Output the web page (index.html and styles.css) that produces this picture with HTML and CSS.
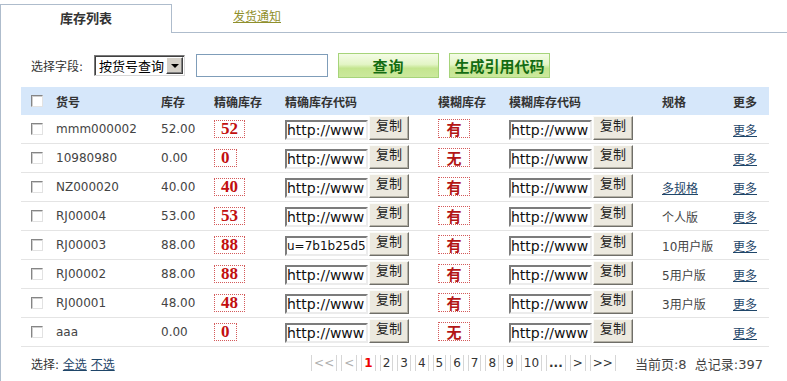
FILE: index.html
```html
<!DOCTYPE html>
<html lang="zh-CN">
<head>
<meta charset="utf-8">
<title>库存列表</title>
<link rel="stylesheet" href="styles.css">
</head>
<body>
<div class="tabs">
  <div class="tab tab-active">库存列表</div>
  <div class="tab tab-normal"><a class="tab-link" href="#">发货通知</a></div>
  <div class="tab-fill"></div>
</div>
<div class="panel">
  <div class="search">
    <span class="search-label">选择字段:</span>
    <div class="select"><span class="select-text">按货号查询</span><span class="select-btn"><span class="arrow"></span></span></div>
    <span class="text-input"></span>
    <span class="gbtn gbtn-query">查询</span>
    <span class="gbtn gbtn-gen">生成引用代码</span>
  </div>

  <div class="grid">
    <div class="grow head">
      <div class="c-cb"><span class="cb"></span></div>
      <div>货号</div><div>库存</div><div>精确库存</div><div>精确库存代码</div>
      <div>模糊库存</div><div>模糊库存代码</div><div>规格</div><div>更多</div>
    </div>

    <div class="grow row">
      <div class="c-cb"><span class="cb"></span></div>
      <div>mmm000002</div><div>52.00</div>
      <div class="c-box"><span class="box num">52</span></div>
      <div class="code"><span class="field">http://www</span><span class="copy">复制</span></div>
      <div class="c-box"><span class="box cjk">有</span></div>
      <div class="code"><span class="field">http://www</span><span class="copy">复制</span></div>
      <div></div><div><a class="link" href="#">更多</a></div>
    </div>

    <div class="grow row">
      <div class="c-cb"><span class="cb"></span></div>
      <div>10980980</div><div>0.00</div>
      <div class="c-box"><span class="box num">0</span></div>
      <div class="code"><span class="field">http://www</span><span class="copy">复制</span></div>
      <div class="c-box"><span class="box cjk">无</span></div>
      <div class="code"><span class="field">http://www</span><span class="copy">复制</span></div>
      <div></div><div><a class="link" href="#">更多</a></div>
    </div>

    <div class="grow row">
      <div class="c-cb"><span class="cb"></span></div>
      <div>NZ000020</div><div>40.00</div>
      <div class="c-box"><span class="box num">40</span></div>
      <div class="code"><span class="field">http://www</span><span class="copy">复制</span></div>
      <div class="c-box"><span class="box cjk">有</span></div>
      <div class="code"><span class="field">http://www</span><span class="copy">复制</span></div>
      <div><a class="link" href="#">多规格</a></div><div><a class="link" href="#">更多</a></div>
    </div>

    <div class="grow row">
      <div class="c-cb"><span class="cb"></span></div>
      <div>RJ00004</div><div>53.00</div>
      <div class="c-box"><span class="box num">53</span></div>
      <div class="code"><span class="field">http://www</span><span class="copy">复制</span></div>
      <div class="c-box"><span class="box cjk">有</span></div>
      <div class="code"><span class="field">http://www</span><span class="copy">复制</span></div>
      <div>个人版</div><div><a class="link" href="#">更多</a></div>
    </div>

    <div class="grow row">
      <div class="c-cb"><span class="cb"></span></div>
      <div>RJ00003</div><div>88.00</div>
      <div class="c-box"><span class="box num">88</span></div>
      <div class="code"><span class="field field-scrolled">u=7b1b25d5</span><span class="copy">复制</span></div>
      <div class="c-box"><span class="box cjk">有</span></div>
      <div class="code"><span class="field">http://www</span><span class="copy">复制</span></div>
      <div>10用户版</div><div><a class="link" href="#">更多</a></div>
    </div>

    <div class="grow row">
      <div class="c-cb"><span class="cb"></span></div>
      <div>RJ00002</div><div>88.00</div>
      <div class="c-box"><span class="box num">88</span></div>
      <div class="code"><span class="field">http://www</span><span class="copy">复制</span></div>
      <div class="c-box"><span class="box cjk">有</span></div>
      <div class="code"><span class="field">http://www</span><span class="copy">复制</span></div>
      <div>5用户版</div><div><a class="link" href="#">更多</a></div>
    </div>

    <div class="grow row">
      <div class="c-cb"><span class="cb"></span></div>
      <div>RJ00001</div><div>48.00</div>
      <div class="c-box"><span class="box num">48</span></div>
      <div class="code"><span class="field">http://www</span><span class="copy">复制</span></div>
      <div class="c-box"><span class="box cjk">有</span></div>
      <div class="code"><span class="field">http://www</span><span class="copy">复制</span></div>
      <div>3用户版</div><div><a class="link" href="#">更多</a></div>
    </div>

    <div class="grow row">
      <div class="c-cb"><span class="cb"></span></div>
      <div>aaa</div><div>0.00</div>
      <div class="c-box"><span class="box num">0</span></div>
      <div class="code"><span class="field">http://www</span><span class="copy">复制</span></div>
      <div class="c-box"><span class="box cjk">无</span></div>
      <div class="code"><span class="field">http://www</span><span class="copy">复制</span></div>
      <div></div><div><a class="link" href="#">更多</a></div>
    </div>
  </div>

  <div class="foot">
    <div class="foot-left">选择: <a class="link" href="#">全选</a> <a class="link" href="#">不选</a></div>
    <div class="foot-right">
      <span class="pg pg-off">&lt;&lt;</span><span class="pg pg-off">&lt;</span><span class="pg pg-cur">1</span><span class="pg">2</span><span class="pg">3</span><span class="pg">4</span><span class="pg">5</span><span class="pg">6</span><span class="pg">7</span><span class="pg">8</span><span class="pg">9</span><span class="pg">10</span><span class="pg pg-dots">...</span><span class="pg">&gt;</span><span class="pg">&gt;&gt;</span>
      <span class="info">当前页:8 &nbsp;总记录:397</span>
    </div>
  </div>
</div>
</body>
</html>
```
FILE: styles.css
```css
html, body {
  margin: 0;
  padding: 0;
  background: #fff;
}
body {
  font: 12px "DejaVu Sans", "Noto Sans CJK SC", sans-serif;
  color: #333;
  overflow: hidden;
}

/* tabs */
.tabs {
  display: flex;
  margin-top: 4px;
  height: 29px;
}
.tab {
  box-sizing: border-box;
  height: 29px;
  display: flex;
  align-items: center;
  justify-content: center;
  padding-bottom: 4px;
}
.tab-active {
  width: 172px;
  border: 1px solid #aebccc;
  border-bottom: none;
  font-weight: bold;
  font-size: 13px;
  color: #333;
  font-family: "Noto Sans CJK SC", sans-serif;
}
.tab-normal {
  width: 170px;
  border-bottom: 1px solid #aebccc;
  padding-bottom: 5px;
}
.tab-link {
  color: #8f8f2c;
  font-size: 12px;
  text-decoration: underline;
  font-family: "Noto Sans CJK SC", sans-serif;
}
.tab-fill {
  flex: 1;
  border-bottom: 1px solid #aebccc;
}

/* panel */
.panel {
  border-left: 1px solid #aebccc;
  padding-top: 20px;
  height: 330px;
}

/* search row */
.search {
  display: flex;
  align-items: center;
  height: 25px;
  padding-left: 30px;
}
.search-label {
  width: 63px;
  color: #333;
}
.select {
  box-sizing: border-box;
  width: 91px;
  height: 21px;
  display: flex;
  align-items: center;
  justify-content: space-between;
  background: #fff;
  border: 1px solid;
  border-color: #7a7a7a #d8d8d8 #d8d8d8 #7a7a7a;
  box-shadow: inset 1px 1px 0 #404040;
  padding: 1px 1px 1px 4px;
}
.select-text {
  font-size: 13px;
  color: #000;
  font-family: "Noto Sans CJK SC", sans-serif;
  line-height: 17px;
}
.select-btn {
  box-sizing: border-box;
  width: 17px;
  height: 17px;
  background: #d4d0c8;
  border: 1px solid;
  border-color: #fff #404040 #404040 #fff;
  box-shadow: inset -1px -1px 0 #808080;
  display: flex;
  align-items: center;
  justify-content: center;
}
.arrow {
  width: 0;
  height: 0;
  border-left: 4px solid transparent;
  border-right: 4px solid transparent;
  border-top: 4px solid #000;
  margin-top: 1px;
}
.text-input {
  box-sizing: border-box;
  width: 132px;
  height: 23px;
  margin-left: 11px;
  border: 1px solid #7f9db9;
  background: #fff;
}
.gbtn {
  box-sizing: border-box;
  width: 101px;
  height: 25px;
  margin-left: 10px;
  display: flex;
  align-items: center;
  justify-content: center;
  border: 1px solid #a6d47a;
  background: linear-gradient(to bottom, #f4fce6 0%, #e3f5c6 45%, #c4e58f 62%, #cbe99c 100%);
  color: #146c12;
  font-weight: bold;
  font-size: 15px;
  font-family: "Noto Sans CJK SC", sans-serif;
  padding-bottom: 1px;
}
.gbtn-query {
  letter-spacing: 1px;
}

/* grid table */
.grid {
  margin: 9px 0 0 20px;
  width: 748px;
}
.grow {
  display: grid;
  grid-template-columns: 35px 105px 53px 71px 153px 71px 153px 71px 36px;
  align-items: center;
  height: 28px;
}
.head {
  background: #d6e7fa;
  font-weight: bold;
  color: #333;
  font-family: "Noto Sans CJK SC", sans-serif;
}
.row {
  border-bottom: 1px solid #e4e4e4;
  color: #444;
}
.c-cb {
  padding-left: 10px;
  display: flex;
  align-items: center;
}
.cb {
  box-sizing: border-box;
  width: 12px;
  height: 12px;
  background: #fff;
  border: 1px solid;
  border-color: #858585 #e2e2e2 #e2e2e2 #858585;
  box-shadow: inset 1px 1px 0 #cfcfcf;
}
.c-box {
  display: flex;
  align-items: center;
}
.box {
  display: flex;
  align-items: center;
  justify-content: center;
  box-sizing: border-box;
  border: 1px dotted #d45a5a;
  color: #c20f0f;
  font-weight: bold;
}
.num {
  font-family: "Liberation Serif", serif;
  font-size: 17px;
  line-height: 16px;
  height: 18px;
  padding: 0 6px;
}
.cjk {
  font-family: "Noto Sans CJK SC", sans-serif;
  font-size: 15px;
  line-height: 17px;
  height: 19px;
  width: 32px;
  color: #b31616;
  margin-top: -1px;
}
.code {
  display: flex;
  align-items: flex-end;
  height: 24px;
  align-self: start;
  margin-top: 1px;
}
.field {
  box-sizing: border-box;
  width: 83px;
  height: 20px;
  background: #fff;
  border: 2px solid;
  border-color: #7c7c7c #ececec #ececec #7c7c7c;
  font-family: "DejaVu Sans", sans-serif;
  font-size: 14px;
  line-height: 16px;
  color: #111;
  white-space: nowrap;
  overflow: hidden;
  padding: 0;
}
.field-scrolled {
  font-size: 12px;
}
.copy {
  box-sizing: border-box;
  width: 40px;
  height: 24px;
  margin-left: 1px;
  background: #ece9df;
  border: 1px solid;
  border-color: #fbfbf8 #6f6e68 #6f6e68 #fbfbf8;
  box-shadow: inset -1px -1px 0 #b4b1a6;
  color: #222;
  font-size: 13px;
  font-family: "Noto Sans CJK SC", sans-serif;
  text-align: center;
  line-height: 16px;
  padding-top: 0;
}
.link {
  color: #1f4669;
  text-decoration: underline;
}

/* footer */
.foot {
  display: flex;
  justify-content: space-between;
  align-items: center;
  margin-left: 20px;
  width: 748px;
  height: 18px;
  padding-top: 7px;
}
.foot-left {
  padding-left: 10px;
  color: #333;
}
.foot-right {
  display: flex;
  align-items: center;
  padding-right: 6px;
}
.pg {
  display: inline-block;
  border-left: 1px solid #d6d6d6;
  border-right: 1px solid #d6d6d6;
  padding: 0 2px;
  margin-right: 4px;
  line-height: 16px;
  color: #333;
  font-size: 12px;
}
.pg-off {
  color: #b0b0b0;
}
.pg-cur {
  color: #e00;
  font-weight: bold;
}
.pg-dots {
  font-weight: bold;
}
.info {
  margin-left: 15px;
  color: #444;
  font-size: 13px;
}
```
